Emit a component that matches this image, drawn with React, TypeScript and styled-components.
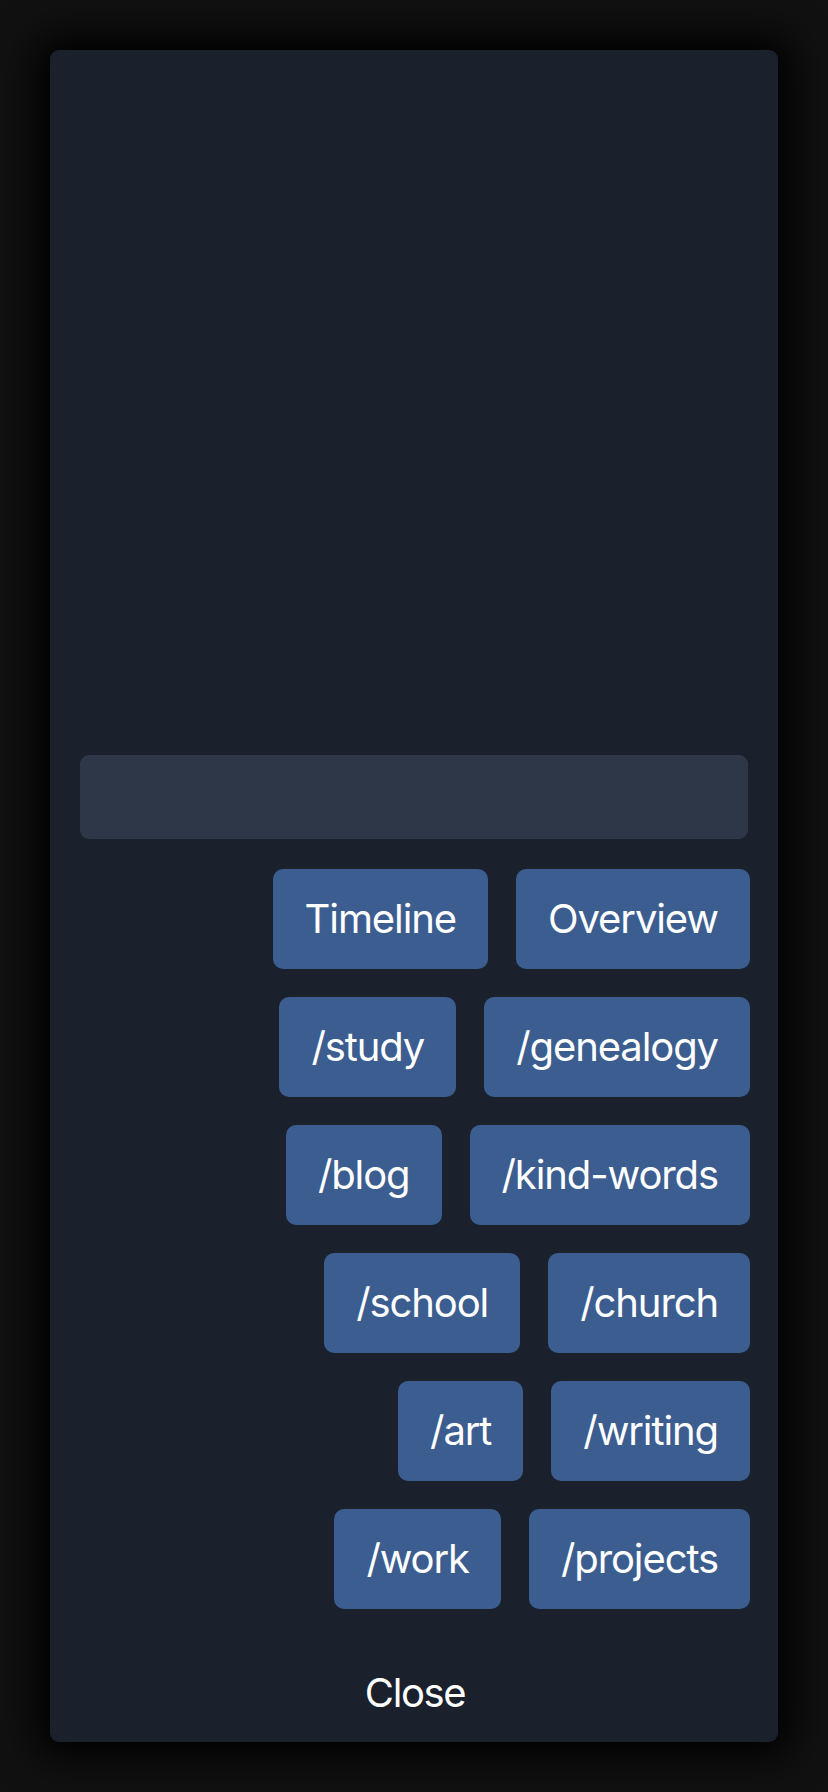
import React from "react";
import styled, { createGlobalStyle } from "styled-components";

const Global = createGlobalStyle`
  html, body {
    margin: 0;
    padding: 0;
    background: #111111;
  }
  body {
    font-family: Inter, "Noto Sans", "Liberation Sans", sans-serif;
  }
  * { box-sizing: border-box; }
`;

const Backdrop = styled.div`
  width: 828px;
  height: 1792px;
  padding: 50px;
  background: #111111;
`;

const Modal = styled.div`
  width: 728px;
  height: 1692px;
  background: #1a202c;
  border-radius: 9px;
  box-shadow: 0 0 40px 14px rgba(0, 0, 0, 1);
  display: flex;
  flex-direction: column;
  padding: 0 28px 0 30px;
`;

const Canvas = styled.div`
  flex: 1;
`;

const SearchInput = styled.input`
  display: block;
  height: 84px;
  margin: 0 2px 30px 0;
  border: none;
  border-radius: 9px;
  background: #2d3748;
  color: #ffffff;
  font-family: inherit;
  font-size: 36px;
  padding: 0 28px;
  outline: none;
`;

const Rows = styled.div`
  display: flex;
  flex-direction: column;
  gap: 28px;
`;

const Row = styled.div`
  display: flex;
  justify-content: flex-end;
  gap: 28px;
`;

const NavButton = styled.button`
  height: 100px;
  padding: 0 32px 2px;
  border: none;
  border-radius: 10px;
  background: #3c5d8f;
  color: #ffffff;
  font-family: Inter, "Noto Sans", sans-serif;
  font-size: 40px;
  letter-spacing: -1.1px;
  font-weight: 400;
  cursor: pointer;
`;

const Footer = styled.div`
  display: flex;
  justify-content: center;
  padding: 43px 0 10px;
`;

const CloseButton = styled.button`
  height: 80px;
  padding: 0 32px;
  border: none;
  background: transparent;
  color: #ffffff;
  font-family: Inter, "Noto Sans", sans-serif;
  font-size: 40px;
  letter-spacing: -1.4px;
  cursor: pointer;
`;

const rows: string[][] = [
  ["Timeline", "Overview"],
  ["/study", "/genealogy"],
  ["/blog", "/kind-words"],
  ["/school", "/church"],
  ["/art", "/writing"],
  ["/work", "/projects"],
];

export default function App() {
  return (
    <>
      <Global />
      <Backdrop>
        <Modal>
          <Canvas />
          <SearchInput type="text" aria-label="Search" />
          <Rows>
            {rows.map((r, i) => (
              <Row key={i}>
                {r.map((label) => (
                  <NavButton key={label}>{label}</NavButton>
                ))}
              </Row>
            ))}
          </Rows>
          <Footer>
            <CloseButton>Close</CloseButton>
          </Footer>
        </Modal>
      </Backdrop>
    </>
  );
}
